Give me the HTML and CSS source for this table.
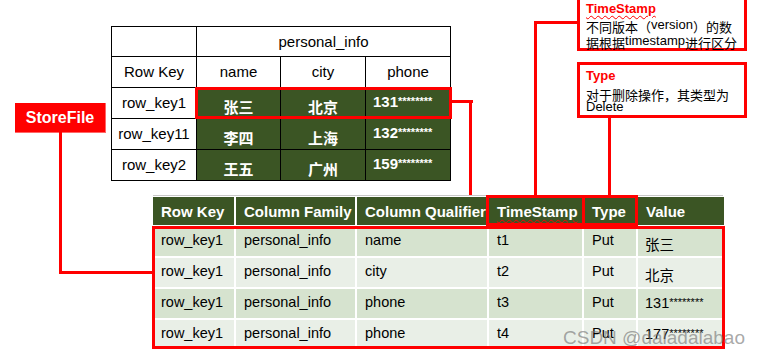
FILE: index.html
```html
<!DOCTYPE html>
<html>
<head>
<meta charset="utf-8">
<link rel="stylesheet" href="styles.css">
</head>
<body>
<div class="canvas">
  <table class="top">
    <colgroup><col class="c1"><col class="c2"><col class="c3"><col class="c4"></colgroup>
    <tr class="r0"><td></td><td colspan="3">personal_info</td></tr>
    <tr><td>Row Key</td><td>name</td><td>city</td><td>phone</td></tr>
    <tr><td>row_key1</td><td class="g"><span class="cn">张三</span></td><td class="g"><span class="cn">北京</span></td><td class="g ph">131<small>********</small></td></tr>
    <tr><td>row_key11</td><td class="g"><span class="cn">李四</span></td><td class="g"><span class="cn">上海</span></td><td class="g ph">132<small>********</small></td></tr>
    <tr class="r5"><td>row_key2</td><td class="g"><span class="cn">王五</span></td><td class="g"><span class="cn">广州</span></td><td class="g ph">159<small>********</small></td></tr>
  </table>

  <div class="hl hl-row1"></div>
  <div class="wire w-row1-h"></div>
  <div class="wire w-row1-v"></div>

  <div class="storefile">StoreFile</div>
  <div class="wire w-sf-v"></div>
  <div class="wire w-sf-h"></div>

  <div class="note note-ts">
    <div class="note-title squig">TimeStamp</div>
    <div class="note-body">不同版本（<span class="up">version</span>）的数<br>据根据<span class="up">timestamp</span>进行区分</div>
  </div>
  <div class="wire w-ts-h"></div>
  <div class="wire w-ts-v"></div>

  <div class="note note-type">
    <div class="note-title">Type</div>
    <div class="note-body">对于删除操作，其类型为<br><span class="del">Delete</span></div>
  </div>
  <div class="wire w-type-v"></div>

  <div class="grayline"></div>
  <table class="bottom">
    <colgroup><col class="b1"><col class="b2"><col class="b3"><col class="b4"><col class="b5"><col class="b6"></colgroup>
    <tr class="head"><th>Row Key</th><th>Column Family</th><th>Column Qualifier</th><th><span class="squig">TimeStamp</span></th><th>Type</th><th>Value</th></tr>
    <tr class="odd"><td>row_key1</td><td>personal_info</td><td>name</td><td>t1</td><td>Put</td><td class="v"><span class="cn2">张三</span></td></tr>
    <tr class="even"><td>row_key1</td><td>personal_info</td><td>city</td><td>t2</td><td>Put</td><td class="v"><span class="cn2">北京</span></td></tr>
    <tr class="odd"><td>row_key1</td><td>personal_info</td><td>phone</td><td>t3</td><td>Put</td><td class="v">131<small>********</small></td></tr>
    <tr class="even last"><td>row_key1</td><td>personal_info</td><td>phone</td><td>t4</td><td>Put</td><td class="v">177<small>********</small></td></tr>
  </table>
  <div class="hl hl-data"></div>
  <div class="hl hl-ts"></div>
  <div class="hl hl-type"></div>

  <div class="watermark">CSDN @daladalabao</div>
</div>
</body>
</html>
```

FILE: styles.css
```css
* { box-sizing: border-box; }
html, body { margin: 0; padding: 0; background: #fff; }
body { font-family: "Liberation Sans", Arial, "Noto Sans CJK SC", sans-serif; }
.canvas { position: relative; width: 759px; height: 355px; overflow: hidden; }

/* top table */
.top {
  position: absolute; left: 111px; top: 26px;
  border-collapse: collapse; table-layout: fixed; width: 339px;
  font-size: 15px; color: #000;
}
.top .c1 { width: 85px; } .top .c2 { width: 84px; } .top .c3 { width: 85px; } .top .c4 { width: 85px; }
.top td { border: 1px solid #000; height: 31px; text-align: center; padding: 0; line-height: 16px; }
.top tr.r0 td { height: 30px; }
.top td.g { background: #3b5524; color: #fff; font-weight: bold; vertical-align: bottom; padding-bottom: 2px; }
.top .cn { font-family: "Noto Sans CJK SC", sans-serif; font-size: 15px; font-weight: bold; }
.top td.ph { vertical-align: top; padding-top: 5px; text-align: left; padding-left: 7px; font-size: 15px; }
.top td.ph small, .bottom td.v small { font-size: 11px; font-weight: normal; vertical-align: 2px; }
.top td.ph small { font-weight: bold; }

/* highlight boxes */
.hl { position: absolute; border: 3px solid #f00; }
.hl-row1 { left: 195px; top: 87px; width: 257px; height: 32px; }
.hl-data { left: 152px; top: 226px; width: 573px; height: 123px; }
.hl-ts { left: 486px; top: 195px; width: 99px; height: 31px; }
.hl-type { left: 582px; top: 195px; width: 56px; height: 31px; }

.wire { position: absolute; background: #f00; }
.w-row1-h { left: 451px; top: 100px; width: 22px; height: 3px; }
.w-row1-v { left: 469px; top: 100px; width: 3px; height: 96px; }
.w-sf-v { left: 59px; top: 132px; width: 3px; height: 142px; }
.w-sf-h { left: 59px; top: 271px; width: 95px; height: 3px; }
.w-ts-h { left: 534px; top: 21px; width: 44px; height: 3px; }
.w-ts-v { left: 534px; top: 21px; width: 3px; height: 175px; }
.w-type-v { left: 608px; top: 116px; width: 3px; height: 80px; }

/* StoreFile label */
.storefile {
  position: absolute; left: 15px; top: 103px; width: 91px; height: 30px;
  background: #f00; color: #fff; font-weight: bold; font-size: 16px;
  display: flex; align-items: center; justify-content: center;
  border-right: 1px solid #f66; border-bottom: 1px solid #f66;
}

/* notes */
.note { position: absolute; border: 3px solid #f00; background: #fff; padding: 0 0 0 6px; }
.note-ts { left: 577px; top: -4px; width: 170px; height: 55px; }
.note-type { left: 577px; top: 62px; width: 170px; height: 56px; }
.note-title { color: #f00; font-weight: bold; font-size: 13px; line-height: 14px; display: inline-block; }
.note-ts .note-title { margin-top: 3px; }
.note-type .note-title { margin-top: 4px; }
.squig { text-decoration: underline wavy #f00; text-decoration-thickness: 1px; text-underline-offset: 2px; }
.note-body { font-family: "Noto Sans CJK SC", sans-serif; font-size: 13px; line-height: 15px; color: #000; white-space: nowrap; }
.note-ts .note-body { margin-top: 2px; }
.note-type .note-body { margin-top: 5px; line-height: 11px; }
.note .up { font-family: "Liberation Sans", Arial, sans-serif; position: relative; top: -3px; }
.note .del { font-family: "Liberation Sans", Arial, sans-serif; font-size: 13px; }

/* bottom table */
.grayline { position: absolute; left: 153px; top: 195px; width: 570px; height: 1px; background: #c8c8c8; }
.bottom {
  position: absolute; left: 153px; top: 197px;
  border-collapse: collapse; table-layout: fixed; width: 571px;
  font-size: 14.5px; color: #000;
}
.bottom .b1 { width: 82px; } .bottom .b2 { width: 121px; } .bottom .b3 { width: 132px; }
.bottom .b4 { width: 95px; } .bottom .b5 { width: 54px; } .bottom .b6 { width: 87px; }
.bottom th, .bottom td { padding: 0 0 0 8px; text-align: left; border-right: 2px solid #fff; border-bottom: 2px solid #fff; white-space: nowrap; overflow: hidden; }
.bottom th:last-child, .bottom td:last-child { border-right: 0; }
.bottom tr.head th { background: #3b5524; color: #fff; font-weight: bold; height: 29px; font-size: 15px; padding-top: 0; }
.bottom td { height: 31px; vertical-align: top; padding-top: 5px; line-height: 17px; }
.bottom tr.last td { height: 30px; border-bottom: 0; }
.bottom tr.odd td { background: #d6e3cf; }
.bottom tr.even td { background: #e9efe7; }
.bottom td.v { padding-left: 7px; }
.bottom .cn2 { font-family: "Noto Sans CJK SC", sans-serif; font-size: 14.5px; display: inline-block; margin-top: 3px; }

.watermark {
  position: absolute; left: 563px; top: 327px;
  font-size: 19px; color: rgba(120,120,120,0.65); white-space: nowrap;
}
```
